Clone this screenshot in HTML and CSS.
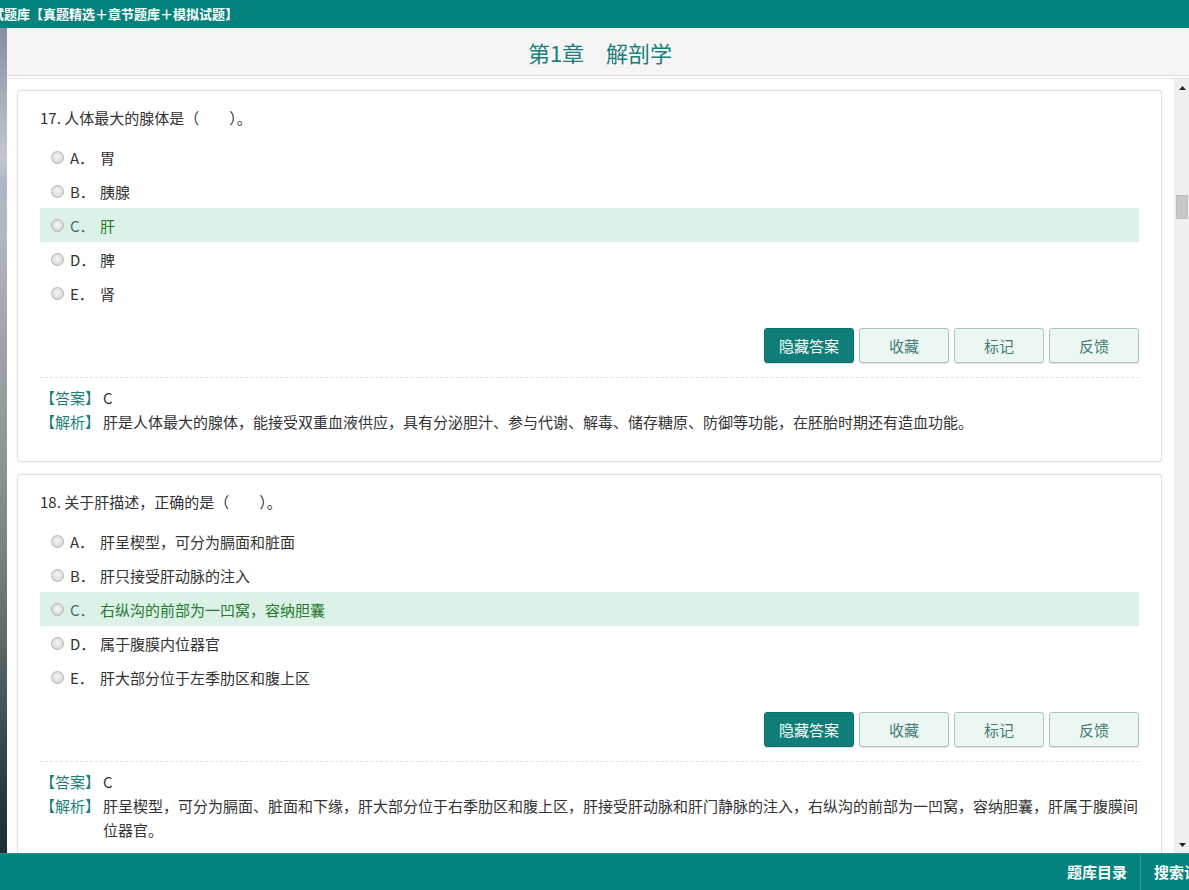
FILE: index.html
```html
<!DOCTYPE html>
<html lang="zh-CN">
<head>
<meta charset="utf-8">
<title>第1章 解剖学</title>
<link rel="stylesheet" href="styles.css">
</head>
<body>
<div class="topbar"><span class="topbar-title">试题库【真题精选＋章节题库＋模拟试题】</span></div>
<div class="middle">
  <div class="desk"></div>
  <div class="window">
    <div class="header"><h1 class="chapter">第1章　解剖学</h1></div>
    <div class="body-area">
      <div class="content">
        <div class="card">
          <div class="question">17. 人体最大的腺体是（　　）。</div>
          <div class="opt"><span class="radio"></span><span class="letter">A．</span><span>胃</span></div>
          <div class="opt"><span class="radio"></span><span class="letter">B．</span><span>胰腺</span></div>
          <div class="opt opt-correct"><span class="radio"></span><span class="letter">C．</span><span>肝</span></div>
          <div class="opt"><span class="radio"></span><span class="letter">D．</span><span>脾</span></div>
          <div class="opt"><span class="radio"></span><span class="letter">E．</span><span>肾</span></div>
          <div class="actions">
            <span class="btn btn-primary">隐藏答案</span>
            <span class="btn">收藏</span>
            <span class="btn">标记</span>
            <span class="btn">反馈</span>
          </div>
          <div class="answer">
            <div class="ans-line"><span class="ans-label">【答案】</span><span>C</span></div>
            <div class="ans-line"><span class="ans-label">【解析】</span><span>肝是人体最大的腺体，能接受双重血液供应，具有分泌胆汁、参与代谢、解毒、储存糖原、防御等功能，在胚胎时期还有造血功能。</span></div>
          </div>
        </div>
        <div class="card">
          <div class="question">18. 关于肝描述，正确的是（　　）。</div>
          <div class="opt"><span class="radio"></span><span class="letter">A．</span><span>肝呈楔型，可分为膈面和脏面</span></div>
          <div class="opt"><span class="radio"></span><span class="letter">B．</span><span>肝只接受肝动脉的注入</span></div>
          <div class="opt opt-correct"><span class="radio"></span><span class="letter">C．</span><span>右纵沟的前部为一凹窝，容纳胆囊</span></div>
          <div class="opt"><span class="radio"></span><span class="letter">D．</span><span>属于腹膜内位器官</span></div>
          <div class="opt"><span class="radio"></span><span class="letter">E．</span><span>肝大部分位于左季肋区和腹上区</span></div>
          <div class="actions">
            <span class="btn btn-primary">隐藏答案</span>
            <span class="btn">收藏</span>
            <span class="btn">标记</span>
            <span class="btn">反馈</span>
          </div>
          <div class="answer">
            <div class="ans-line"><span class="ans-label">【答案】</span><span>C</span></div>
            <div class="ans-line"><span class="ans-label">【解析】</span><span>肝呈楔型，可分为膈面、脏面和下缘，肝大部分位于右季肋区和腹上区，肝接受肝动脉和肝门静脉的注入，右纵沟的前部为一凹窝，容纳胆囊，肝属于腹膜间位器官。</span></div>
          </div>
        </div>
      </div>
      <div class="scrollbar">
        <div class="sb-btn"><svg width="7" height="4" viewBox="0 0 7 4"><path d="M0 4 L3.5 0 L7 4 Z" fill="#222"/></svg></div>
        <div class="sb-track"><div class="sb-thumb" style="margin-top:99px"></div></div>
        <div class="sb-btn"><svg width="7" height="4" viewBox="0 0 7 4"><path d="M0 0 L3.5 4 L7 0 Z" fill="#222"/></svg></div>
      </div>
    </div>
  </div>
</div>
<div class="bottombar">
  <nav class="bb-nav">
    <span class="bb-item">题库目录</span>
    <span class="bb-item bb-sep">搜索试题</span>
  </nav>
</div>
</body>
</html>
```

FILE: styles.css
```css
html, body {
  margin: 0;
  padding: 0;
}

body {
  width: 1189px;
  height: 890px;
  overflow: hidden;
  display: flex;
  flex-direction: column;
  font-family: "Noto Sans CJK SC", "Microsoft YaHei", sans-serif;
  color: #333;
  background: #fff;
}

.topbar {
  height: 28px;
  flex: none;
  background: #04827d;
  color: #fff;
  font-weight: bold;
  font-size: 13px;
  line-height: 28px;
  white-space: nowrap;
  overflow: hidden;
}

.topbar-title {
  display: inline-block;
  margin-left: -9px;
}

.middle {
  flex: 1;
  display: flex;
  min-height: 0;
}

.desk {
  width: 7px;
  flex: none;
  background: linear-gradient(180deg, #858da0 0%, #a7adb9 8%, #c3c6cc 16%, #aab6c6 19%, #b4b8bf 24%, #9da1a6 40%, #8a918f 55%, #6d7a74 68%, #4b5a5c 80%, #2a3a42 92%, #1f2d35 100%);
}

.window {
  flex: 1;
  min-width: 0;
  display: flex;
  flex-direction: column;
  background: #fff;
}

.header {
  height: 47px;
  flex: none;
  background: #f5f5f5;
  border-bottom: 1px solid #d9d9d9;
  display: flex;
  align-items: center;
  justify-content: center;
}

.chapter {
  margin: 0 0 0 4px;
  font-size: 22px;
  font-weight: 400;
  color: #1b7f7a;
  line-height: 30px;
}

.body-area {
  flex: 1;
  min-height: 0;
  display: flex;
  margin-top: 2px;
  border-top: 1px solid #e6e6e6;
}

.content {
  flex: 1;
  min-width: 0;
  overflow: hidden;
  padding: 0 12px 0 10px;
}

.card {
  border: 1px solid #e2e2e2;
  border-radius: 4px;
  box-shadow: 0 0 3px rgba(0, 0, 0, 0.07);
  padding: 17px 22px 27px;
  margin-top: 12px;
  background: #fff;
}

.card:first-child {
  margin-top: 11px;
}

.question {
  font-size: 15px;
  line-height: 20px;
  margin-bottom: 12px;
}

.opt {
  height: 34px;
  display: flex;
  align-items: center;
  padding-left: 11px;
  font-size: 15px;
}

.radio {
  width: 13px;
  height: 13px;
  box-sizing: border-box;
  border-radius: 50%;
  border: 1px solid #b3b3b3;
  background: radial-gradient(circle at 50% 45%, #f6f6f6 0%, #e4e4e4 45%, #cfcfcf 100%);
  margin-right: 6px;
  flex: none;
}

.letter {
  width: 30px;
  flex: none;
}

.opt-correct {
  background: #dcf1e8;
  color: #277a2c;
}

.opt-correct .letter {
  color: #3f6f69;
}

.actions {
  display: flex;
  justify-content: flex-end;
  gap: 5px;
  margin-top: 18px;
}

.btn {
  width: 90px;
  height: 35px;
  box-sizing: border-box;
  border: 1px solid #a9c6c1;
  border-radius: 3px;
  background: #ecf7f4;
  color: #457a76;
  font-size: 15px;
  display: flex;
  align-items: center;
  justify-content: center;
  box-shadow: 0 1px 1px rgba(0, 0, 0, 0.12);
}

.btn-primary {
  background: #0f7e78;
  border-color: #0c716b;
  color: #fff;
}

.answer {
  border-top: 1px dashed #e3e3e3;
  margin-top: 14px;
  padding-top: 8px;
  font-size: 15px;
  line-height: 24px;
}

.ans-line {
  display: flex;
}

.ans-label {
  flex: none;
  color: #1a7f79;
  margin-right: 3px;
}

.scrollbar {
  width: 14px;
  flex: none;
  background: #f0f0f0;
  border-left: 1px solid #e9e9e9;
  display: flex;
  flex-direction: column;
}

.sb-btn {
  height: 17px;
  flex: none;
  display: flex;
  align-items: center;
  justify-content: center;
}

.sb-track {
  flex: 1;
}

.sb-thumb {
  width: 12px;
  height: 24px;
  margin-left: 1px;
  box-sizing: border-box;
  background: #c8c8c8;
  border: 1px solid #bdbdbd;
}

.bottombar {
  height: 37px;
  flex: none;
  background: #04827d;
  border-top: 1px solid #1f8f89;
  box-sizing: border-box;
  display: flex;
  align-items: center;
  overflow: hidden;
  white-space: nowrap;
}

.bb-nav {
  margin-left: auto;
  margin-right: -38px;
  display: flex;
  align-items: center;
}

.bb-item {
  color: #fff;
  font-weight: bold;
  font-size: 15px;
  line-height: 36px;
  padding: 0 13px;
}

.bb-sep {
  border-left: 1px solid rgba(255, 255, 255, 0.18);
}
```
